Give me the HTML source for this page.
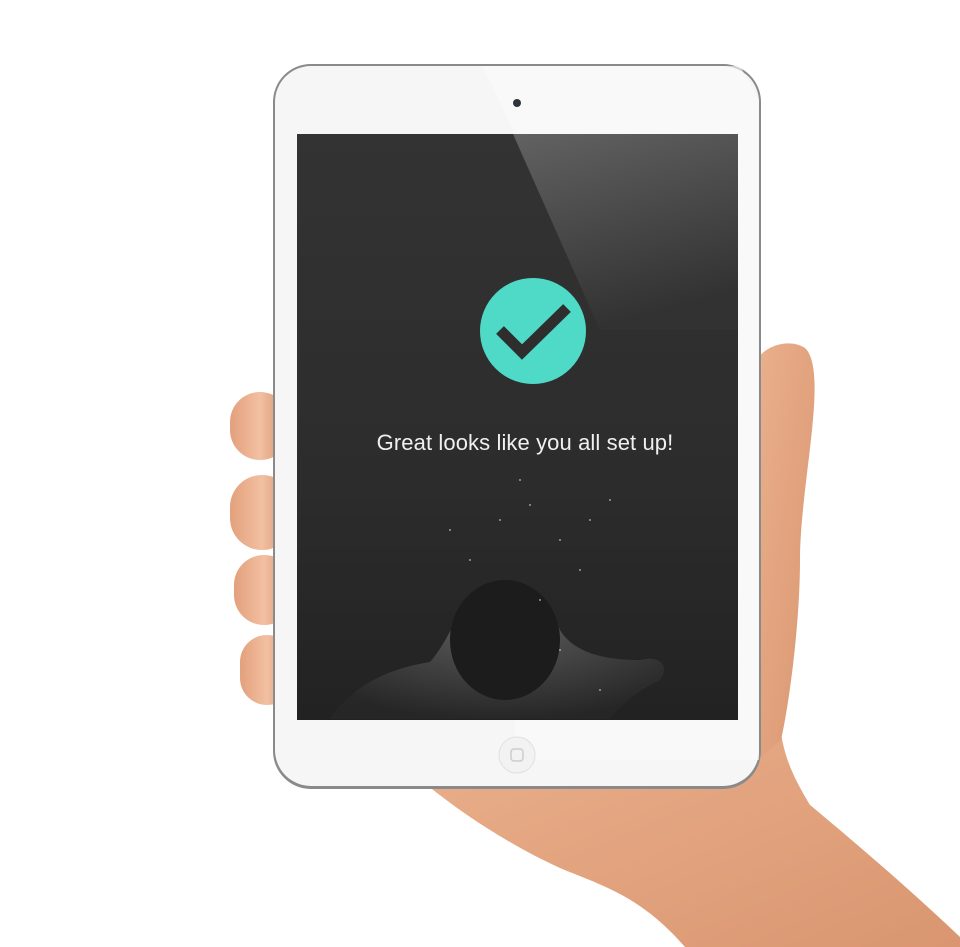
<!DOCTYPE html>
<html><head><meta charset="utf-8"><style>
html,body{margin:0;padding:0;background:#fff;width:960px;height:947px;overflow:hidden}
svg{position:absolute;left:0;top:0}
.t{position:absolute;left:305px;width:440px;top:430px;text-align:center;color:#f0f0f0;font:300 22px "Liberation Sans",sans-serif;letter-spacing:0.1px}
</style></head><body>
<svg width="960" height="947" viewBox="0 0 960 947">
<defs>
<linearGradient id="skin" x1="0" y1="0" x2="1" y2="1">
<stop offset="0" stop-color="#eab08c"/><stop offset="1" stop-color="#d99670"/></linearGradient>
<linearGradient id="fing" x1="0" y1="0" x2="1" y2="0">
<stop offset="0" stop-color="#e3a07c"/><stop offset="0.5" stop-color="#f2c0a2"/><stop offset="1" stop-color="#d08a64"/></linearGradient>
<linearGradient id="scr" x1="0" y1="0" x2="0" y2="1">
<stop offset="0" stop-color="#333"/><stop offset="0.6" stop-color="#2c2c2c"/><stop offset="1" stop-color="#222"/></linearGradient>
<linearGradient id="refl" x1="0" y1="0" x2="0.3" y2="1">
<stop offset="0" stop-color="#6a6a6a"/><stop offset="1" stop-color="#333"/></linearGradient>
<radialGradient id="body" cx="0.5" cy="0.3" r="0.7">
<stop offset="0" stop-color="#8a8a8a"/><stop offset="1" stop-color="#2a2a2a"/></radialGradient>
</defs>
<path d="M427 785 C470 820 520 850 560 868 C600 885 640 895 685 947 L960 947 L960 937 C900 880 840 830 810 805 C795 780 785 760 781 733 L760 720 L740 785 Z" fill="url(#skin)"/>
<path d="M757 360 C765 345 790 338 805 348 C818 360 815 400 812 430 C808 470 800 520 800 560 C800 620 790 700 781 740 L757 760 Z" fill="url(#skin)"/>
<rect x="230" y="392" width="60" height="68" rx="30" fill="url(#fing)"/>
<rect x="230" y="475" width="64" height="75" rx="32" fill="url(#fing)"/>
<rect x="234" y="555" width="60" height="70" rx="30" fill="url(#fing)"/>
<rect x="240" y="635" width="54" height="70" rx="27" fill="url(#fing)"/>
<rect x="273" y="64" width="488" height="725" rx="38" fill="#8a8a8a"/>
<rect x="275" y="66" width="484" height="720" rx="36" fill="#f6f6f6"/>
<path d="M483 66 L740 66 L759 100 L759 760 L515 760 L515 134 Z" fill="#fbfbfb" opacity="0.6"/>
<circle cx="517" cy="103" r="4" fill="#333"/><circle cx="517" cy="103" r="1.5" fill="#1a3a6a"/>
<rect x="297" y="134" width="441" height="586" fill="url(#scr)"/>
<path d="M513 134 L738 134 L738 330 L600 330 Z" fill="url(#refl)" opacity="0.85"/>
<path d="M330 719 C350 690 380 670 430 662 C450 640 460 600 490 585 C520 575 545 590 560 630 C575 655 610 660 640 660 C660 655 670 665 660 680 C640 690 625 700 610 719 Z" fill="url(#body)" opacity="0.55"/>
<ellipse cx="505" cy="640" rx="55" ry="60" fill="#1c1c1c"/>
<g fill="#ccc" opacity="0.7">
<circle cx="500" cy="520" r="1"/><circle cx="530" cy="505" r="1"/><circle cx="560" cy="540" r="1"/><circle cx="470" cy="560" r="1"/><circle cx="590" cy="520" r="1"/><circle cx="540" cy="600" r="1"/><circle cx="600" cy="690" r="1"/><circle cx="520" cy="480" r="1"/><circle cx="580" cy="570" r="1"/><circle cx="450" cy="530" r="1"/><circle cx="560" cy="650" r="1"/><circle cx="610" cy="500" r="1"/>
</g>
<circle cx="533" cy="331" r="53" fill="#4fd9c7"/>
<path d="M500 330 L522 352 L567 308" fill="none" stroke="#2e2e2e" stroke-width="11"/>
<circle cx="517" cy="755" r="18" fill="#f2f2f2" stroke="#e0e0e0"/>
<rect x="511" y="749" width="12" height="12" rx="3" fill="none" stroke="#ccc" stroke-width="1.5"/>
</svg>
<div class="t">Great looks like you all set up!</div>
</body></html>
